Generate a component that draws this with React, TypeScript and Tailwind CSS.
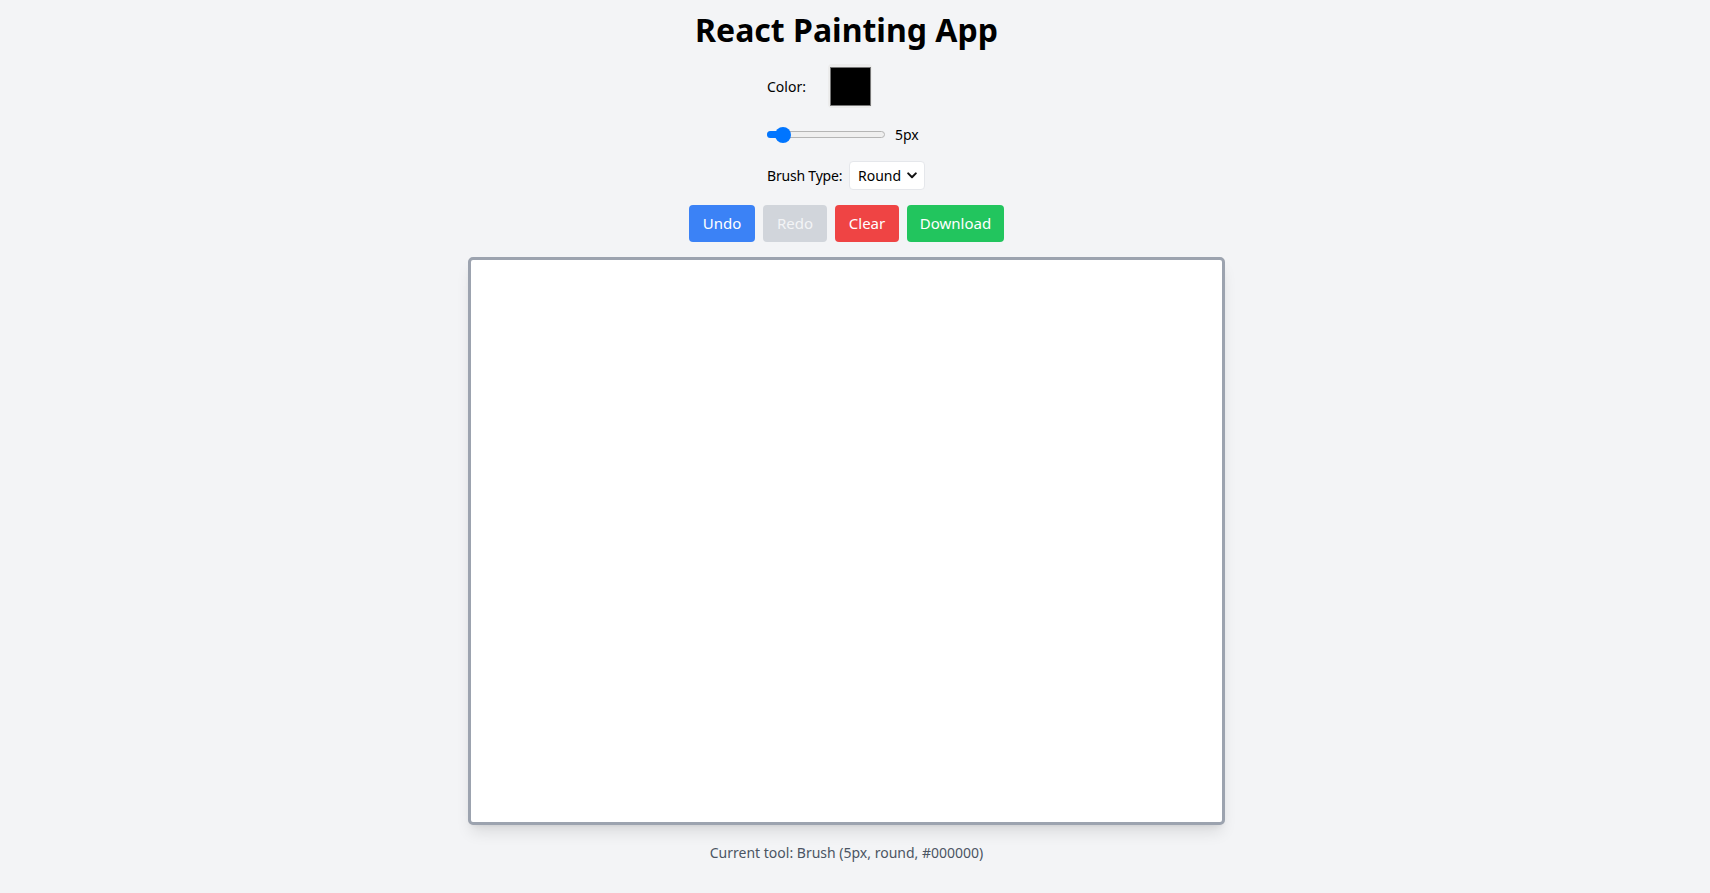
import React from "react";

export default function App() {
  const font = { fontFamily: '"Noto Sans", "Open Sans", sans-serif' };
  return (
    <div className="min-h-screen w-full bg-[#f3f4f6] pr-[17px]" style={font}>
      <div className="flex flex-col items-center">
        <h1 className="mt-[10px] h-[40px] text-[32px] leading-[40px] font-bold text-black">
          React Painting App
        </h1>

        <div className="mt-[14px] flex w-[159px] flex-col items-start text-[14px] text-black">
          <div className="flex h-[44px] items-center">
            <span className="w-[61px] whitespace-nowrap">Color:</span>
            <div className="flex h-[44px] w-[44px] items-center justify-center rounded-sm bg-[#ececec]">
              <div className="h-[39px] w-[41px] border border-[#767676] bg-black" />
            </div>
          </div>

          <div className="mt-[14px] flex h-[24px] items-center">
            <div className="relative h-[24px] w-[118px]">
              <div className="absolute left-0 right-0 top-[9px] h-[7px] rounded-full border border-[#b5b5b5] bg-[#efefef]" />
              <div className="absolute left-0 top-[9px] h-[7px] w-[18px] rounded-l-full bg-[#0075ff]" />
              <div className="absolute left-[8px] top-[5px] h-[16px] w-[16px] rounded-full bg-[#0075ff]" />
            </div>
            <span className="ml-[10px] whitespace-nowrap">5px</span>
          </div>

          <div className="mt-[15px] flex h-[29px] items-center">
            <span className="w-[82px] shrink-0 whitespace-nowrap tracking-[-0.2px]">Brush Type:</span>
            <div className="flex h-[29px] w-[76px] shrink-0 items-center justify-between rounded-[4px] border border-[#e5e7eb] bg-white pl-[8px] pr-[7px]">
              <span>Round</span>
              <svg width="10" height="7" viewBox="0 0 10 7" fill="none">
                <path d="M1.2 1.4 L5 5.2 L8.8 1.4" stroke="#111" strokeWidth="2" strokeLinecap="round" strokeLinejoin="round" />
              </svg>
            </div>
          </div>
        </div>

        <div className="mt-[15px] flex h-[37px] gap-2 text-[15px] text-white">
          <button className="h-[37px] w-[66px] rounded-[4px] bg-[#3b82f6]">Undo</button>
          <button className="h-[37px] w-[64px] rounded-[4px] bg-[#d1d5db] text-[#f3f4f6]">Redo</button>
          <button className="h-[37px] w-[64px] rounded-[4px] bg-[#ef4444]">Clear</button>
          <button className="h-[37px] w-[97px] rounded-[4px] bg-[#22c55e]">Download</button>
        </div>

        <div className="mt-[15px] h-[568px] w-[757px] rounded-[5px] border-[3px] border-[#9ca3af] bg-white shadow-lg" />

        <p className="mt-[18px] h-[20px] text-[14px] leading-[20px] text-[#4b5563]">
          Current tool: Brush (5px, round, #000000)
        </p>
      </div>
    </div>
  );
}
